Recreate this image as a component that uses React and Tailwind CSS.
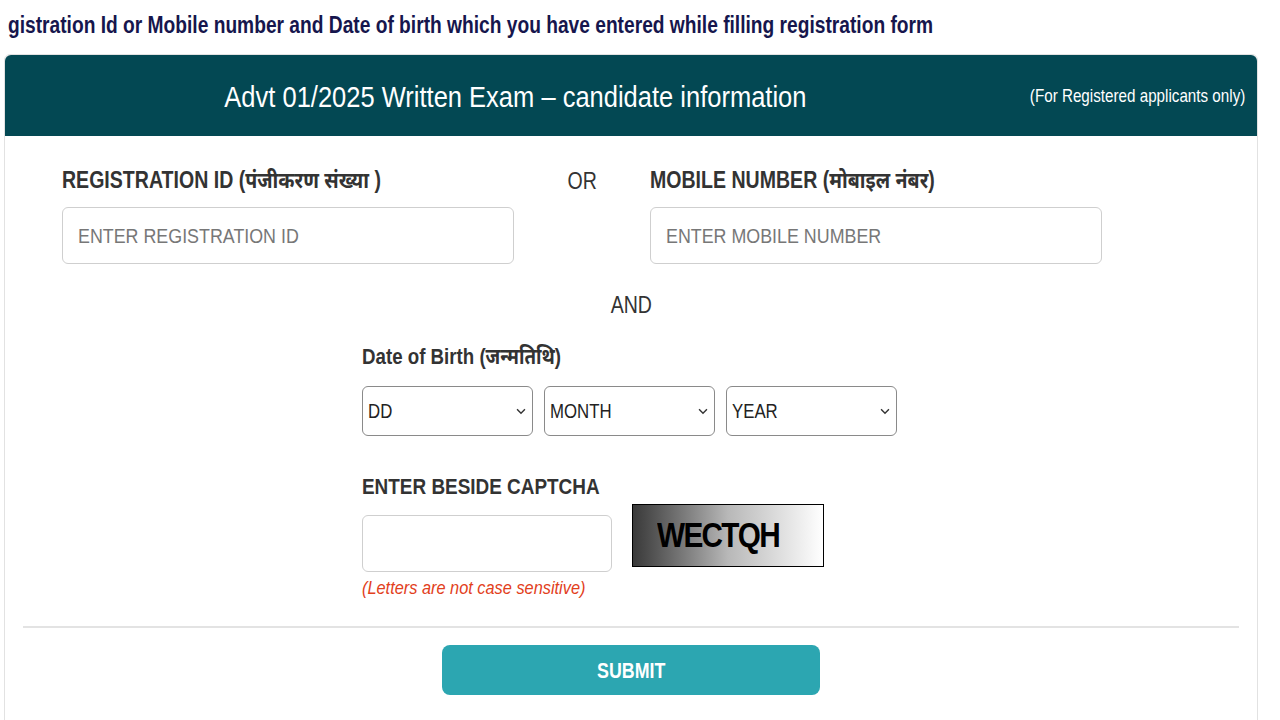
import React from 'react';

const font = { fontFamily: '"Liberation Sans", "Noto Sans", sans-serif' };

// the screenshot text is squeezed horizontally, so every line is narrowed
const T = ({ className = '', children }) => (
  <span className={`inline-block shrink-0 whitespace-nowrap ${className}`}>{children}</span>
);

const Chevron = () => (
  <svg className="w-[14px] h-[14px] text-[#333]" viewBox="0 0 16 16" fill="none" stroke="currentColor" strokeWidth="1.6">
    <path d="M3.5 6l4.5 4.5L12.5 6" />
  </svg>
);

const Select = ({ label }) => (
  <div className="w-[171px] h-[50px] border border-[#8a8a8a] rounded-md flex items-center justify-between pl-[5px] pr-[4px] text-[21px] text-[#222]">
    <T className="origin-left scale-x-[0.8]">{label}</T>
    <Chevron />
  </div>
);

const App = () => {
  return (
    <div className="w-[1280px] h-[720px] bg-white overflow-hidden" style={font}>
      {/* intro line */}
      <div className="h-[54px] pl-[8px] pt-[8px] text-[23px] font-bold text-[#16164d]">
        <T className="origin-left scale-x-[0.834]">
          gistration Id or Mobile number and Date of birth which you have entered while filling registration form
        </T>
      </div>

      {/* card */}
      <div className="ml-[4px] w-[1254px] border border-[#e2e2e2] rounded-t-md">
        <div className="h-[81px] bg-[#034853] rounded-t-md flex items-center">
          <div className="w-[1020px] shrink-0 text-center text-white text-[30px] pt-[1px]">
            <T className="origin-center scale-x-[0.85]">Advt 01/2025 Written Exam – candidate information</T>
          </div>
          <div className="flex-1 min-w-0 flex justify-end pr-[12px] text-white text-[19px] pt-[2px]">
            <T className="origin-right scale-x-[0.8]">(For Registered applicants only)</T>
          </div>
        </div>

        <div className="h-[590px]">
          {/* id / mobile */}
          <div className="flex pt-[27px] pl-[57px]">
            <div className="w-[452px]">
              <div className="text-[23px] font-bold text-[#333] h-[44px]">
                <T className="origin-left scale-x-[0.85]">REGISTRATION ID (पंजीकरण संख्या )</T>
              </div>
              <div className="h-[57px] border border-[#cfcfcf] rounded-md flex items-center pl-[15px] text-[21px] text-[#777]">
                <T className="origin-left scale-x-[0.85]">ENTER REGISTRATION ID</T>
              </div>
            </div>
            <div className="w-[136px] text-center text-[23px] text-[#333] pt-[1px]">
              <T className="origin-center scale-x-[0.85]">OR</T>
            </div>
            <div className="w-[452px]">
              <div className="text-[23px] font-bold text-[#333] h-[44px]">
                <T className="origin-left scale-x-[0.85]">MOBILE NUMBER (मोबाइल नंबर)</T>
              </div>
              <div className="h-[57px] border border-[#cfcfcf] rounded-md flex items-center pl-[15px] text-[21px] text-[#777]">
                <T className="origin-left scale-x-[0.85]">ENTER MOBILE NUMBER</T>
              </div>
            </div>
          </div>

          <div className="text-center text-[23px] text-[#333] mt-[24px]">
            <T className="origin-center scale-x-[0.85]">AND</T>
          </div>

          {/* dob */}
          <div className="pl-[357px] mt-[17px]">
            <div className="text-[22px] font-bold text-[#333] h-[46px]">
              <T className="origin-left scale-x-[0.85]">Date of Birth (जन्मतिथि)</T>
            </div>
            <div className="flex gap-[11px]">
              <Select label="DD" />
              <Select label="MONTH" />
              <Select label="YEAR" />
            </div>

            <div className="text-[22px] font-bold text-[#333] mt-[34px]">
              <T className="origin-left scale-x-[0.86]">ENTER BESIDE CAPTCHA</T>
            </div>
            <div className="flex items-start gap-[20px] mt-[1px]">
              <div className="w-[250px]">
                <div className="w-[250px] h-[57px] mt-[11px] border border-[#cfcfcf] rounded-md" />
                <div className="italic text-[#e2401c] text-[19px] mt-[2px]">
                  <T className="origin-left scale-x-[0.86]">(Letters are not case sensitive)</T>
                </div>
              </div>
              <div className="w-[192px] h-[63px] border border-black bg-gradient-to-r from-[#3a3a3a] via-[#b8b8b8] to-white flex items-center pl-[24px]">
                <T className="origin-left scale-x-[0.85] text-[35px] font-bold text-black tracking-[-2px]">WECTQH</T>
              </div>
            </div>
          </div>

          <div className="mx-[18px] mt-[24px] border-t-2 border-[#e3e3e3]" />

          <div className="flex justify-center mt-[17px]">
            <button className="w-[378px] h-[50px] bg-[#2ca6b1] rounded-lg text-white text-[22px] font-bold">
              <T className="origin-center scale-x-[0.81]">SUBMIT</T>
            </button>
          </div>
        </div>
      </div>
    </div>
  );
};

export default App;
